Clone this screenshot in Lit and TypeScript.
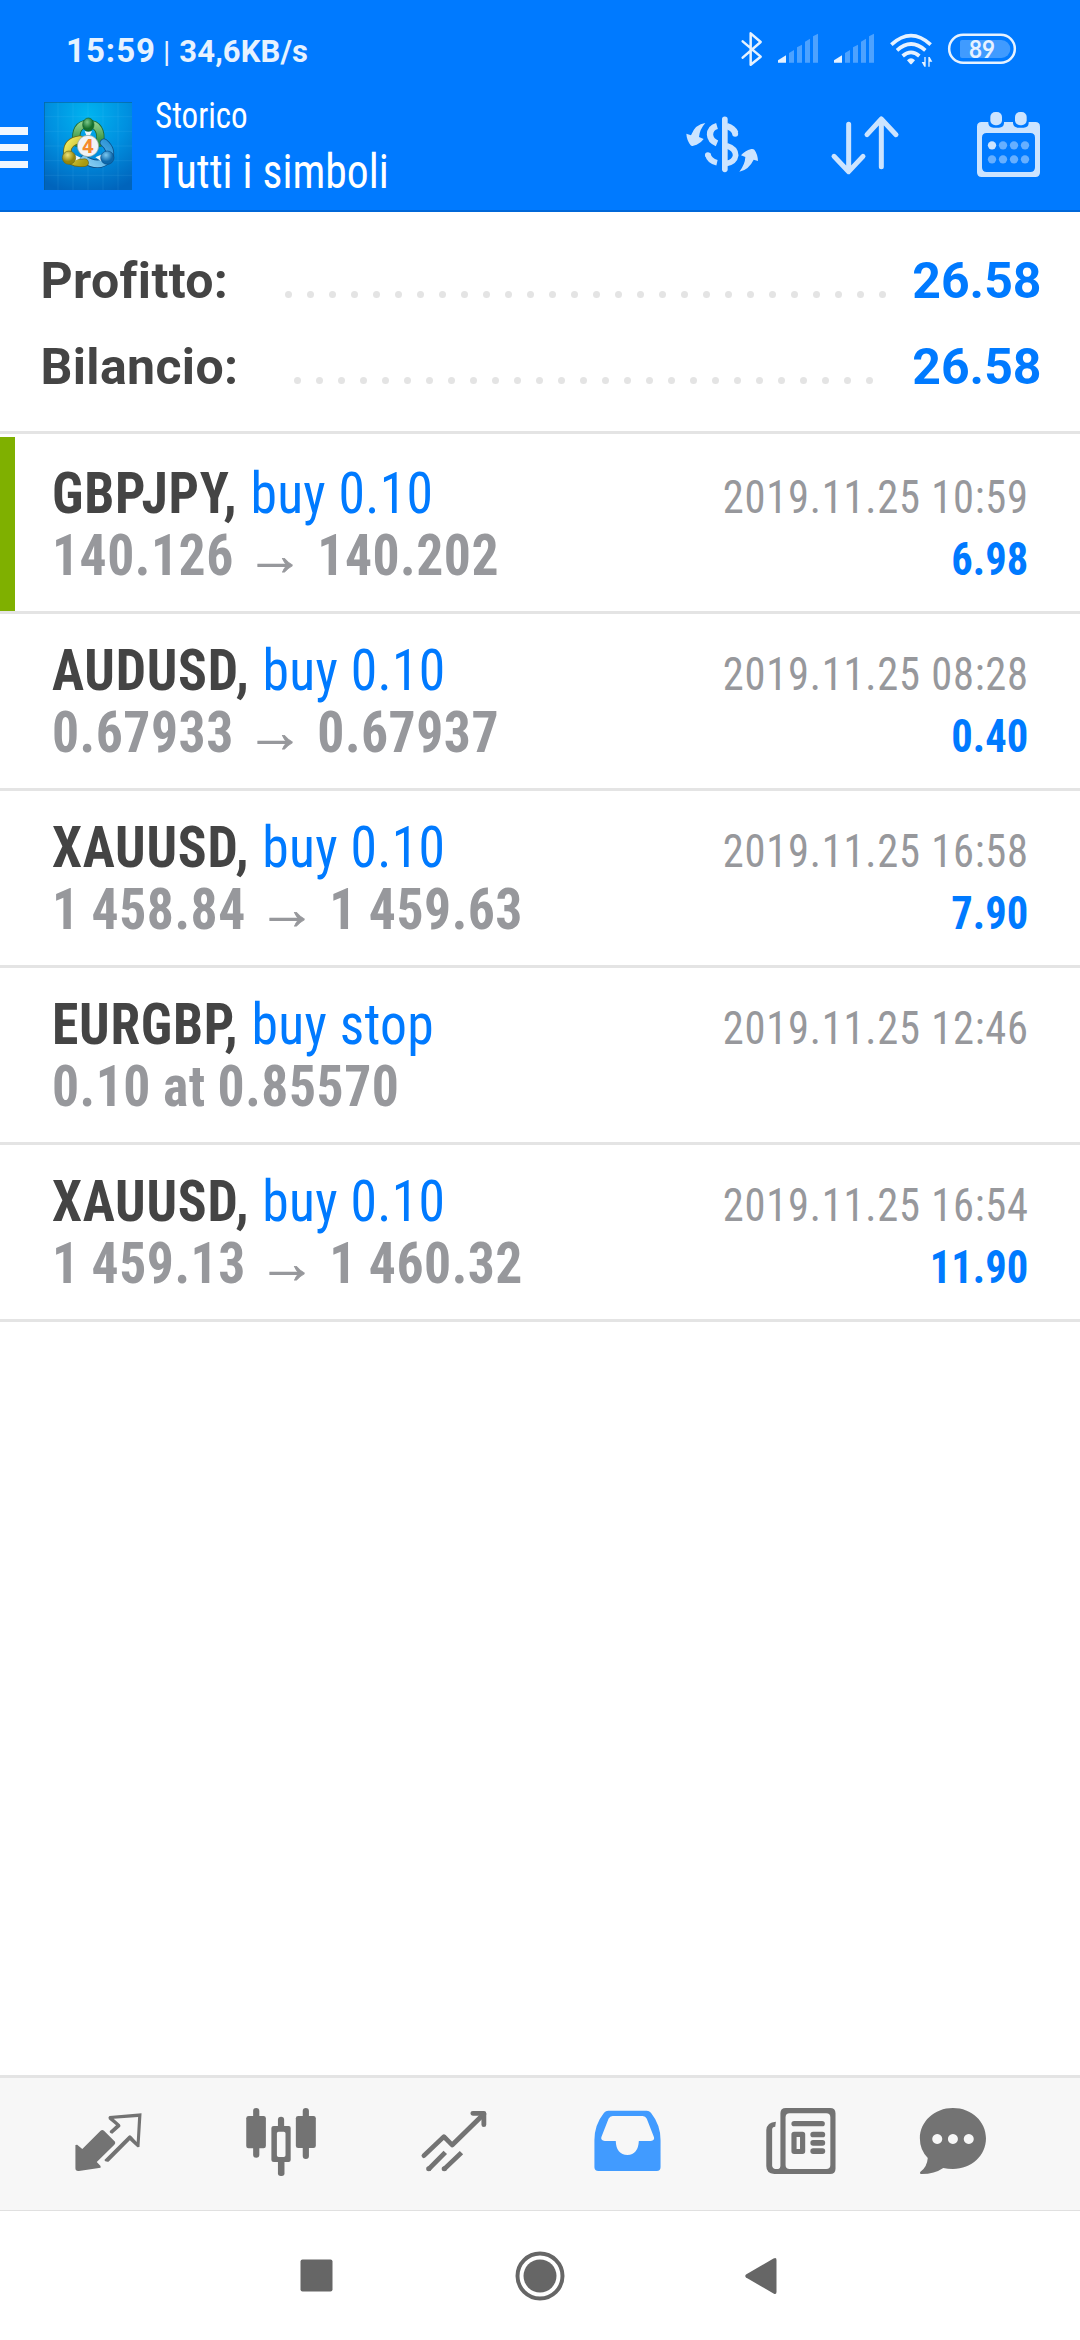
import { LitElement, html, svg, css } from "lit";
import { customElement, property } from "lit/decorators.js";

interface Deal {
  symbol: string;
  action: string;
  from: string;
  to?: string;
  time: string;
  profit?: string;
}

const DEALS: Deal[] = [
  { symbol: "GBPJPY", action: "buy 0.10", from: "140.126", to: "140.202", time: "2019.11.25 10:59", profit: "6.98" },
  { symbol: "AUDUSD", action: "buy 0.10", from: "0.67933", to: "0.67937", time: "2019.11.25 08:28", profit: "0.40" },
  { symbol: "XAUUSD", action: "buy 0.10", from: "1 458.84", to: "1 459.63", time: "2019.11.25 16:58", profit: "7.90" },
  { symbol: "EURGBP", action: "buy stop", from: "0.10 at 0.85570", time: "2019.11.25 12:46" },
  { symbol: "XAUUSD", action: "buy 0.10", from: "1 459.13", to: "1 460.32", time: "2019.11.25 16:54", profit: "11.90" },
];

const range = (n: number) => Array.from({ length: n }, (_, i) => i);

const signal = (dx: number) => svg`
  <g transform="translate(${dx} 0)">
    <path fill="#e6f2ff" d="M354 181L378 166V188H354Z"/>
    <path fill="#4da2ff" d="M387 159L402 150V188H387ZM411 142L426 134V188H411ZM435 125L450 116V188H435ZM459 109L474 101V188H459Z"/>
  </g>`;

@customElement("status-bar")
export class StatusBar extends LitElement {
  static styles = css`
    :host { display: flex; justify-content: space-between; height: 88px; color: #e6f2ff; font-family: Roboto, sans-serif; font-weight: 700; }
    .clock { display: flex; align-items: baseline; padding: 31px 0 0 66px; line-height: 39px; white-space: pre; }
    .time { font-size: 33px; letter-spacing: 1px; }
    .bar { font-size: 30px; font-weight: 400; margin: 0 9px 0 7px; }
    .rate { font-size: 31px; letter-spacing: 0.1px; }
    .icons { display: block; width: 420px; height: 88px; }
    .level { font-family: Lato, sans-serif; font-weight: 700; font-size: 73px; }
  `;
  render() {
    return html`
      <div class="clock"><span class="time">15:59</span><span class="bar">|</span><span class="rate">34,6KB/s</span></div>
      <svg class="icons" viewBox="0 0 1260 264" fill="none">
        <path d="M248 124L302 170L272 194V100L302 126L248 173" stroke="#e6f2ff" stroke-width="7.5" stroke-linecap="round" stroke-linejoin="round"/>
        ${signal(0)}${signal(168)}
        <g stroke="#e6f2ff" stroke-width="11">
          <path d="M694 134Q753 80 812 134M711 151Q753 113 796 151M728 168Q753 146 778 168"/>
        </g>
        <path fill="#e6f2ff" d="M741 181Q753 168 765 181L756 191Q753 194 750 191Z"/>
        <path fill="#e6f2ff" d="M793 171H797V200H793L785 186H793ZM805 200V171H809L817 185H809V200Z"/>
        <path fill="#409bff" d="M906 120H1024A27 27 0 0 1 1024 174H906Q900 174 900 168V126Q900 120 906 120Z"/>
        <rect x="867.5" y="104.5" width="197" height="84" rx="42" stroke="#e6f2ff" stroke-width="7.500"/>
        <text class="level" x="927" y="174" fill="#e6f2ff" textLength="78" lengthAdjust="spacingAndGlyphs">89</text>
      </svg>
    `;
  }
}

@customElement("title-bar")
export class TitleBar extends LitElement {
  static styles = css`
    :host { display: flex; height: 124px; box-sizing: border-box; border-bottom: 2px solid #0068d9; color: #fff; font-family: Roboto, sans-serif; font-stretch: 75%; }
    .menu { width: 28px; height: 41px; margin-top: 39px; display: flex; flex-direction: column; justify-content: space-between; }
    .line { height: 7.5px; background: #f0f7ff; }
    .logo { width: 88px; height: 88px; margin: 14px 23.2px 0 16px; display: block; }
    .badge { font-family: "Open Sans", sans-serif; font-weight: 700; font-size: 56px; }
    .titles { display: flex; flex-direction: column; white-space: nowrap; flex: 1; transform: scaleX(.918); transform-origin: left; }
    .section { font-size: 36px; line-height: 42px; margin-top: 7px; }
    .scope { font-size: 47.5px; line-height: 56px; margin-top: 7px; }
    .actions { display: block; width: 420px; height: 122px; }
  `;
  render() {
    return html`
      <div class="menu"><div class="line"></div><div class="line"></div><div class="line"></div></div>
      <svg class="logo" viewBox="132 306 264 264">
        <defs>
          <radialGradient id="sky" cx="50%" cy="15%" r="90%"><stop offset="0" stop-color="#00b4f0"/><stop offset=".5" stop-color="#0090e0"/><stop offset="1" stop-color="#0064bc"/></radialGradient>
          <linearGradient id="green" x1="0" y1="0" x2="0" y2="1"><stop offset="0" stop-color="#8fd08a"/><stop offset="1" stop-color="#2c8c3a"/></linearGradient>
          <linearGradient id="gold" x1="0" y1="0" x2="1" y2="1"><stop offset="0" stop-color="#f2ec62"/><stop offset="1" stop-color="#aa9a10"/></linearGradient>
          <linearGradient id="azure" x1="1" y1="0" x2="0" y2="1"><stop offset="0" stop-color="#2b93d6"/><stop offset="1" stop-color="#8cd2f5"/></linearGradient>
          <radialGradient id="gball" cx="40%" cy="30%"><stop offset="0" stop-color="#7cc98a"/><stop offset="1" stop-color="#14702c"/></radialGradient>
          <radialGradient id="yball" cx="40%" cy="30%"><stop offset="0" stop-color="#eee47a"/><stop offset="1" stop-color="#94860c"/></radialGradient>
          <radialGradient id="bball" cx="40%" cy="30%"><stop offset="0" stop-color="#7cc8f0"/><stop offset="1" stop-color="#0c68ac"/></radialGradient>
        </defs>
        <rect x="132" y="306" width="264" height="264" fill="url(#sky)"/>
        <path d="M174 306V570M219 306V570M264 306V570M309 306V570M354 306V570M132 350H396M132 394H396M132 438H396M132 482H396M132 526H396" stroke="#7fd0ff" stroke-opacity=".16" stroke-width="2"/>
        <path d="M133 570V307H396" fill="none" stroke="#0a5a8c" stroke-width="2"/>
        <g stroke-linecap="round" fill="none">
          <path d="M230 428Q222 374 264 371Q308 374 300 428" stroke="#1f6a34" stroke-width="25"/>
          <path d="M230 428Q222 374 264 371Q308 374 300 428" stroke="url(#green)" stroke-width="20"/>
          <path d="M312 428Q338 450 326 476Q298 506 252 478" stroke="#0b4f88" stroke-width="25"/>
          <path d="M312 428Q338 450 326 476Q298 506 252 478" stroke="url(#azure)" stroke-width="20"/>
          <path d="M240 419Q202 424 202 456Q204 494 254 488" stroke="#6e6a18" stroke-width="25"/>
          <path d="M240 419Q202 424 202 456Q204 494 254 488" stroke="url(#gold)" stroke-width="20"/>
        </g>
        <path d="M221 463L224 482L244 474ZM308 462L286 472L304 484ZM254 394H276L270 406H259Z" fill="#eef7f8"/>
        <ellipse cx="265" cy="374" rx="17" ry="20" fill="url(#gball)" stroke="#14602c" stroke-width="2"/>
        <circle cx="207" cy="473" r="20" fill="url(#yball)" stroke="#6e6a18" stroke-width="2"/>
        <circle cx="322" cy="473" r="20" fill="url(#bball)" stroke="#0b4f88" stroke-width="2"/>
        <circle cx="264" cy="438" r="32" fill="#f2f3f6" stroke="#8aa09a" stroke-width="2"/>
        <text class="badge" x="247" y="458" fill="#f58a2c" textLength="34" lengthAdjust="spacingAndGlyphs">4</text>
      </svg>
      <div class="titles"><span class="section">Storico</span><span class="scope">Tutti i simboli</span></div>
      <svg class="actions" viewBox="0 264 1260 366" fill="none" stroke-linecap="round" stroke-linejoin="round">
        <g stroke="#cce4ff" stroke-width="17">
          <path d="M194.500 358V508"/>
          <path stroke-linecap="butt" stroke-width="19" d="M171 378Q150 384 150 404Q151 422 171 430M200 378Q220 384 226 399"/>
          <path stroke-linecap="butt" d="M200 437Q227 445 227 466Q224 486 200 490"/>
          <path stroke-linecap="butt" d="M143 462Q148 483 171 488"/>
        </g>
        <circle cx="143.500" cy="465" r="8.500" fill="#cce4ff"/><circle cx="225.500" cy="401" r="9" fill="#cce4ff"/>
        <path fill="#cce4ff" d="M136 369Q106 372 93 406L79 401Q80 420 92 436Q95 439 100 437L110 434Q124 428 131 417L117 411Q119 388 136 369ZM238 515Q266 510 281 479L294 483Q293 462 283 449Q280 446 274 447Q254 452 243 466L256 471Q255 494 238 515Z"/>
        <path d="M566 373V514M522 469L566 515L609 469M664 500V359M621 404L664 357L708 404" stroke="#cce4ff" stroke-width="15"/>
        <path fill="#cce4ff" fill-rule="evenodd" d="M965 366H985V370Q987 383 1000 383H1017Q1031 383 1032 370V366H1059V370Q1061 383 1074 383H1091Q1105 383 1106 370V366H1126Q1140 366 1140 380V517Q1140 531 1126 531H965Q951 531 951 517V380Q951 366 965 366ZM980 399Q966 399 966 413V502Q966 516 980 516H1111Q1125 516 1125 502V413Q1125 399 1111 399Z"/>
        <rect x="991" y="336" width="35" height="40" rx="15" fill="#cce4ff"/><rect x="1065" y="336" width="35" height="40" rx="15" fill="#cce4ff"/>
        ${range(8).map((i) => svg`<circle cx=${996 + (i % 4) * 33} cy=${i < 4 ? 436 : 478} r="12.500" fill=${i === 0 ? "#cce4ff" : "#66afff"}/>`)}
      </svg>
    `;
  }
}

@customElement("summary-line")
export class SummaryLine extends LitElement {
  @property() label = "";
  @property() value = "";
  @property({ type: Number }) dots = 0;
  @property({ type: Number }) inset = 0;
  static styles = css`
    :host { display: flex; align-items: baseline; height: 86px; padding: 0 38.5px 0 40.5px; box-sizing: border-box; font: 700 50px/58px Roboto, sans-serif; color: #444; }
    .leader { flex: 1; display: flex; justify-content: flex-end; gap: 15px; }
    .dot { width: 7px; height: 7px; border-radius: 50%; background: #e4e4e4; }
    .value { color: #007aff; }
    .label { letter-spacing: 0.35px; }
  `;
  render() {
    return html`
      <span class="label">${this.label}</span>
      <div class="leader" style="padding-right:${this.inset}px">${range(this.dots).map(() => html`<i class="dot"></i>`)}</div>
      <span class="value">${this.value}</span>
    `;
  }
}

@customElement("deal-row")
export class DealRow extends LitElement {
  @property({ attribute: false }) deal!: Deal;
  @property({ type: Boolean, reflect: true }) marked = false;
  static styles = css`
    :host { display: grid; grid-template-columns: 1fr auto; grid-auto-rows: 62px; align-items: baseline; align-content: start; box-sizing: border-box; height: 177px; padding: 25px 51px 0 51.7px; border-bottom: 3px solid #e4e4e4; white-space: nowrap; font-family: Roboto, sans-serif; font-stretch: 75%; font-size: 58px; line-height: 62px; position: relative; }
    .marker { position: absolute; left: 0; top: 0; bottom: 0; width: 15px; background: #7fb000; }
    .left { transform: scaleX(.925); transform-origin: left; }
    .right { transform: scaleX(.925); transform-origin: right; text-align: right; font-size: 46px; }
    .symbol { font-weight: 700; color: #444; letter-spacing: 0.8px; }
    .action { color: #007aff; letter-spacing: 0.3px; margin-left: 0.8px; }
    .price { font-weight: 700; color: #97989c; letter-spacing: 0.55px; word-spacing: -1px; }
    .arrow { display: inline-block; font-family: "Liberation Sans", sans-serif; font-stretch: 100%; margin: 0 2.9px; transform: scaleX(1.081); -webkit-text-stroke: 0.8px #97989c; }
    .time { color: #97989c; letter-spacing: 0.8px; }
    .profit { font-weight: 700; color: #007aff; padding-right: 0.7px; }
  `;
  render() {
    const d = this.deal;
    return html`
      ${this.marked ? html`<div class="marker"></div>` : ""}
      <div class="left"><span class="symbol">${d.symbol},</span> <span class="action">${d.action}</span></div>
      <div class="right time">${d.time}</div>
      <div class="left price">${d.from}${d.to ? html` <span class="arrow">→</span> ${d.to}` : ""}</div>
      <div class="right profit">${d.profit ?? ""}</div>
    `;
  }
}

@customElement("tab-bar")
export class TabBar extends LitElement {
  static styles = css`
    :host { display: flex; box-sizing: border-box; height: 136px; padding-left: 22px; background: #f7f7f7; border-top: 3px solid #e4e4e4; border-bottom: 1px solid #e0e0e0; }
    .tab { display: block; width: 173px; height: 132px; fill: #737373; }
    .last { width: 131px; }
    .stroke { fill: none; stroke: #737373; stroke-linecap: round; stroke-linejoin: round; }
    .active { fill: #419bff; }
  `;
  render() {
    return html`
      <svg class="tab" viewBox="63.900 54 502.300 396" preserveAspectRatio="none">
        <path d="M219 255L224 254L239 267L292 212Q297 208 302 212L334 245Q336 250 332 254L281 306L292 318V323L229 333Q219 334 219 325Z"/>
        <path fill-rule="evenodd" d="M411 160L318 168Q313 171 316 178L337 196L319 213Q317 220 326 221L349 200Q351 197 348 193L330 176L401 171L397 246L381 228Q377 224 373 228L303 300Q304 306 315 305L377 241L399 262L405 261Z"/>
      </svg>
      <svg class="tab" viewBox="566.200 54 502.300 396" preserveAspectRatio="none">
        <rect x="735" y="144" width="18" height="149" rx="9"/><rect x="715" y="168" width="57" height="97" rx="7"/>
        <rect x="879" y="144" width="18" height="153" rx="9"/><rect x="859" y="168" width="58" height="96" rx="7"/>
        <rect x="807" y="170" width="18" height="36" rx="9"/><rect x="807" y="295" width="19" height="53" rx="8"/>
        <path fill-rule="evenodd" d="M795 198H838Q844 198 844 204V300Q844 306 838 306H795Q788 306 788 300V204Q788 198 795 198ZM809 215Q804 215 804 220V286Q804 291 809 291H824Q829 291 829 286V220Q829 215 824 215Z"/>
      </svg>
      <svg class="tab" viewBox="1068.600 54 502.300 396" preserveAspectRatio="none">
        <g class="stroke" stroke-width="14">
          <path d="M1231 287L1289 230L1313 255L1405 162"/><path d="M1373 160H1405V194"/>
          <path stroke-linecap="butt" d="M1244 328L1293 277M1289 328L1340 278"/>
        </g>
        <circle cx="1245" cy="326" r="7.500"/><circle cx="1290" cy="326" r="7.500"/>
      </svg>
      <svg class="tab active" viewBox="2.900 54 502.300 396" preserveAspectRatio="none">
        <path fill-rule="evenodd" d="M198 152H310Q317 152 322 158Q350 194 350 240V322Q350 333 339 333H170Q158 333 158 322V240Q158 194 186 158Q191 152 198 152ZM211 168Q203 168 199 176L178 232Q176 242 188 243H220Q221 284 254 285Q285 284 287 243H322Q333 242 331 232L310 176Q306 168 298 168Z"/>
      </svg>
      <svg class="tab" viewBox="505.200 54 502.300 396" preserveAspectRatio="none">
        <path fill-rule="evenodd" d="M714 144H842Q858 144 858 160V326Q858 342 842 342H680Q657 340 657 318V210Q659 186 685 185L683 200Q674 201 674 208V317Q675 326 684 327H692Q698 326 698 318V160Q698 144 714 144ZM725 160Q713 160 713 172V315Q713 327 725 327H831Q843 327 843 315V172Q843 160 831 160Z"/>
        <rect x="730" y="183" width="97" height="16" rx="8"/>
        <path fill-rule="evenodd" d="M738 215H762Q770 215 770 223V274Q770 282 762 282H738Q730 282 730 274V223Q730 215 738 215ZM745 231V267H755V231Z"/>
        <rect x="785" y="215" width="43" height="17" rx="8"/><rect x="785" y="240" width="43" height="17" rx="8"/><rect x="785" y="265" width="43" height="17" rx="8"/>
      </svg>
      <svg class="tab last" viewBox="1007.600 54 380.400 396" preserveAspectRatio="none">
        <path fill-rule="evenodd" d="M1199 144C1254 144 1295 185 1295 235C1295 286 1254 327 1199 327Q1184 327 1171 324Q1146 342 1108 342Q1102 342 1104 336Q1124 322 1126 294Q1103 270 1103 235C1103 185 1145 144 1199 144ZM1153.500 222a14.500 15 0 1 0 .01 0ZM1199 222a14.500 15 0 1 0 .01 0ZM1245 222a14.500 15 0 1 0 .01 0Z"/>
      </svg>
    `;
  }
}

@customElement("system-nav")
export class SystemNav extends LitElement {
  static styles = css`
    :host { display: flex; align-items: center; justify-content: center; height: 129px; background: #fff; }
    .keys { display: block; width: 480px; height: 52px; }
  `;
  render() {
    return html`
      <svg class="keys" viewBox="299.500 2249.500 480 52" fill="#666">
        <rect x="300" y="2259" width="32" height="32" rx="2"/>
        <circle cx="539.500" cy="2275.500" r="22.500" fill="none" stroke="#666" stroke-width="4"/>
        <circle cx="539.500" cy="2275.500" r="16.500"/>
        <path d="M745.500 2274L773 2258Q776 2256.500 776 2259.500V2291.500Q776 2294.500 773 2293L745.500 2277Q744 2275.500 745.500 2274Z"/>
      </svg>
    `;
  }
}

@customElement("app-root")
export class AppRoot extends LitElement {
  static styles = css`
    :host { display: flex; flex-direction: column; width: 1080px; height: 2340px; background: #fff; overflow: hidden; }
    .head { background: #007aff; }
    .summary { box-sizing: border-box; height: 222px; padding-top: 40px; border-bottom: 3px solid #e4e4e4; }
    .list { flex: 1; padding-top: 3px; }
  `;
  render() {
    return html`
      <div class="head"><status-bar></status-bar><title-bar></title-bar></div>
      <div class="summary">
        <summary-line label="Profitto:" value="26.58" .dots=${28} .inset=${26.5}></summary-line>
        <summary-line label="Bilancio:" value="26.58" .dots=${27} .inset=${39}></summary-line>
      </div>
      <div class="list">${DEALS.map((d, i) => html`<deal-row .deal=${d} ?marked=${i === 0}></deal-row>`)}</div>
      <tab-bar></tab-bar>
      <system-nav></system-nav>
    `;
  }
}
